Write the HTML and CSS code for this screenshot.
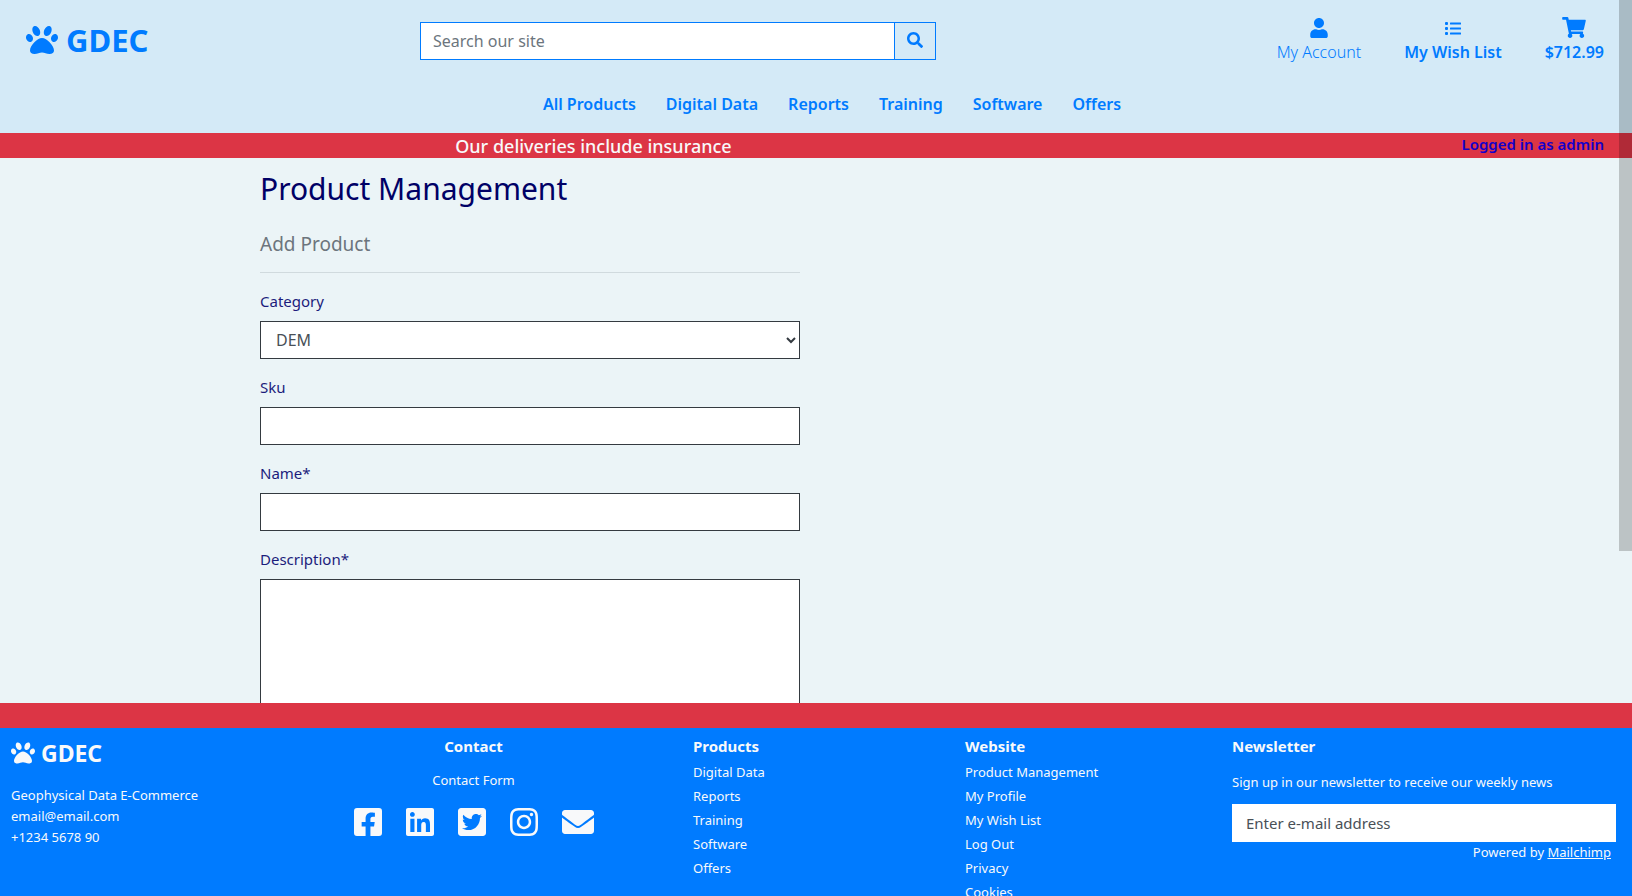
FILE: index.html
```html
<!DOCTYPE html>
<html lang="en">
<head>
<meta charset="utf-8">
<meta name="viewport" content="width=device-width, initial-scale=1">
<title>GDEC - Product Management</title>
<link rel="stylesheet" href="styles.css">
</head>
<body>
<svg class="sprite" aria-hidden="true">
  <symbol id="paw" viewBox="0 0 512 512"><path d="M256 224c-79.41 0-192 122.76-192 200.25 0 34.9 26.81 55.75 71.74 55.75 48.84 0 81.09-25.08 120.26-25.08 39.51 0 71.85 25.08 120.26 25.08 44.93 0 71.74-20.85 71.74-55.75C448 346.76 335.41 224 256 224zm-147.28-12.61c-10.4-34.65-42.44-57.09-71.56-50.13-29.12 6.96-44.29 40.69-33.89 75.34 10.4 34.65 42.44 57.09 71.56 50.13 29.12-6.96 44.29-40.69 33.89-75.34zm84.72-20.78c30.94-8.14 42.93-50.07 26.8-93.68-16.15-43.6-54.3-72.36-85.25-64.21s-42.93 50.08-26.8 93.68c16.15 43.6 54.31 72.36 85.25 64.21zm281.39-29.34c-29.12-6.96-61.15 15.48-71.56 50.13-10.4 34.65 4.77 68.38 33.89 75.34 29.12 6.96 61.15-15.48 71.56-50.13 10.4-34.65-4.77-68.38-33.89-75.34zm-156.27 29.34c30.94 8.14 69.11-20.61 85.25-64.21 16.15-43.6 4.15-85.54-26.79-93.68-30.95-8.14-69.1 20.61-85.25 64.21-16.14 43.6-4.15 85.53 26.79 93.68z"/></symbol>
</svg>

<header class="header">
  <div class="top">
    <a class="brand" href="#"><svg class="brand-paw"><use href="#paw"/></svg>GDEC</a>
    <form class="search">
      <input class="search-input" type="text" placeholder="Search our site" aria-label="Search our site">
      <button class="search-button" type="button" aria-label="Search">
        <svg width="16" height="16" viewBox="0 0 512 512"><path d="M505 442.7L405.3 343c-4.5-4.5-10.6-7-17-7H372c27.6-35.3 44-79.7 44-128C416 93.1 322.9 0 208 0S0 93.1 0 208s93.1 208 208 208c48.3 0 92.7-16.4 128-44v16.3c0 6.400 2.500 12.500 7 17l99.700 99.700c9.400 9.400 24.600 9.400 33.900 0l28.300-28.300c9.400-9.400 9.400-24.600.1-34zM208 336c-70.700 0-128-57.200-128-128 0-70.700 57.200-128 128-128 70.700 0 128 57.200 128 128 0 70.700-57.200 128-128 128z"/></svg>
      </button>
    </form>
    <div class="user-links">
      <a class="user-link light" href="#">
        <svg width="18" height="20" viewBox="0 0 448 512"><path d="M224 256c70.700 0 128-57.300 128-128S294.700 0 224 0 96 57.300 96 128s57.300 128 128 128zm89.600 32h-16.700c-22.200 10.200-46.900 16-72.900 16s-50.600-5.800-72.900-16h-16.700C60.200 288 0 348.200 0 422.400V464c0 26.500 21.500 48 48 48h352c26.500 0 48-21.500 48-48v-41.600c0-74.200-60.200-134.400-134.400-134.400z"/></svg>
        My Account</a>
      <a class="user-link" href="#">
        <svg width="16" height="16" viewBox="0 0 16 16"><rect x="0" y="2" width="3" height="3" rx="1"/><rect x="0" y="7" width="3" height="3" rx="1"/><rect x="0" y="12" width="3" height="3" rx="1"/><rect x="5" y="2.500" width="11" height="2" rx=".5"/><rect x="5" y="7.500" width="11" height="2" rx=".5"/><rect x="5" y="12.500" width="11" height="2" rx=".5"/></svg>
        My Wish List</a>
      <a class="user-link" href="#">
        <svg width="24" height="21" viewBox="0 0 576 512"><path d="M528.120 301.319l47.273-208C578.806 78.301 567.391 64 551.990 64H159.208l-9.166-44.810C147.758 8.021 137.930 0 126.529 0H24C10.745 0 0 10.745 0 24v16c0 13.255 10.745 24 24 24h69.883l70.248 343.435C147.325 417.100 136 435.222 136 456c0 30.928 25.072 56 56 56s56-25.072 56-56c0-15.674-6.447-29.835-16.824-40h209.647C430.447 426.165 424 440.326 424 456c0 30.928 25.072 56 56 56s56-25.072 56-56c0-22.172-12.888-41.332-31.579-50.405l5.517-24.276c3.413-15.018-8.002-29.319-23.403-29.319H218.117l-6.545-32h293.145c11.206 0 20.920-7.754 23.403-18.681z"/></svg>
        $712.99</a>
    </div>
  </div>
  <nav class="nav" aria-label="Products">
    <a href="#">All Products</a><a href="#">Digital Data</a><a href="#">Reports</a><a href="#">Training</a><a href="#">Software</a><a href="#">Offers</a>
  </nav>
</header>

<div class="banner">
  <p class="banner-text">Our deliveries include insurance</p>
  <p class="banner-user">Logged in as admin</p>
</div>

<main class="main">
  <div class="container">
    <form class="product-form">
      <h1 class="title">Product Management</h1>
      <h2 class="subtitle">Add Product</h2>
      <hr class="rule">
      <label class="label" for="category">Category</label>
      <div class="select-wrap">
        <select class="control select" id="category"><option>DEM</option></select>
        <svg class="chevron" width="10" height="7" viewBox="0 0 10 7"><path d="M1 1l4 4 4-4" fill="none" stroke="currentColor" stroke-width="2"/></svg>
      </div>
      <label class="label" for="sku">Sku</label>
      <input class="control" id="sku" type="text">
      <label class="label" for="name">Name*</label>
      <input class="control" id="name" type="text">
      <label class="label" for="description">Description*</label>
      <textarea class="control area" id="description" rows="10"></textarea>
    </form>
  </div>
</main>

<footer class="footer">
  <div class="footer-strip"></div>
  <div class="footer-grid">
    <div class="col">
      <a class="footer-brand" href="#"><svg class="footer-paw"><use href="#paw"/></svg>GDEC</a>
      <address class="address">Geophysical Data E-Commerce<br>email@email.com<br>+1234 5678 90</address>
    </div>
    <div class="col contact">
      <h3 class="heading">Contact</h3>
      <a class="contact-link" href="#">Contact Form</a>
      <div class="social">
        <a href="#" aria-label="Facebook"><svg width="28" height="32" viewBox="0 0 448 512"><path d="M400 32H48A48 48 0 0 0 0 80v352a48 48 0 0 0 48 48h137.250V327.690h-63V256h63v-54.640c0-62.150 37-96.480 93.670-96.480 27.140 0 55.520 4.840 55.520 4.840v61h-31.270c-30.810 0-40.420 19.120-40.420 38.730V256h68.780l-11 71.690h-57.780V480H400a48 48 0 0 0 48-48V80a48 48 0 0 0-48-48z"/></svg></a>
        <a href="#" aria-label="LinkedIn"><svg width="28" height="32" viewBox="0 0 448 512"><path d="M416 32H31.900C14.300 32 0 46.500 0 64.300v383.400C0 465.500 14.300 480 31.900 480H416c17.600 0 32-14.500 32-32.300V64.300c0-17.800-14.400-32.300-32-32.300zM135.400 416H69V202.200h66.500V416zm-33.200-243c-21.300 0-38.500-17.300-38.500-38.500S80.900 96 102.200 96c21.200 0 38.500 17.300 38.500 38.500 0 21.300-17.200 38.500-38.500 38.500zm282.100 243h-66.400V312c0-24.800-.5-56.700-34.500-56.700-34.600 0-39.900 27-39.900 54.900V416h-66.400V202.200h63.700v29.200h.9c8.900-16.800 30.600-34.500 62.900-34.500 67.200 0 79.700 44.300 79.700 101.900V416z"/></svg></a>
        <a href="#" aria-label="Twitter"><svg width="28" height="32" viewBox="0 0 448 512"><path d="M400 32H48C21.500 32 0 53.500 0 80v352c0 26.500 21.500 48 48 48h352c26.500 0 48-21.500 48-48V80c0-26.500-21.500-48-48-48zm-48.900 158.800c.2 2.800.2 5.700.2 8.500 0 86.700-66 186.600-186.600 186.600-37.200 0-71.700-10.800-100.700-29.400 5.300.6 10.400.8 15.800.8 30.700 0 58.900-10.400 81.400-28-28.800-.6-53-19.500-61.300-45.500 10.100 1.500 19.200 1.500 29.600-1.200-30-6.100-52.500-32.500-52.500-64.400v-.8c8.700 4.900 18.900 7.900 29.600 8.300a65.447 65.447 0 0 1-29.200-54.600c0-12.200 3.200-23.400 8.900-33.100 32.300 39.800 80.800 65.800 135.200 68.600-9.300-44.500 24-80.600 64-80.600 18.900 0 35.900 7.900 47.900 20.700 14.800-2.800 29-8.300 41.600-15.800-4.900 15.200-15.200 28-28.800 36.100 13.200-1.400 26-5.100 37.800-10.200-8.900 13.100-20.100 24.700-32.900 34z"/></svg></a>
        <a href="#" aria-label="Instagram"><svg width="28" height="32" viewBox="0 0 448 512"><path d="M224.100 141c-63.600 0-114.900 51.300-114.900 114.900s51.300 114.900 114.900 114.900S339 319.500 339 255.900 287.700 141 224.100 141zm0 189.600c-41.100 0-74.700-33.500-74.700-74.700s33.500-74.700 74.700-74.700 74.700 33.500 74.700 74.700-33.600 74.700-74.700 74.700zm146.400-194.300c0 14.900-12 26.800-26.800 26.800-14.900 0-26.800-12-26.800-26.800s12-26.800 26.800-26.800 26.800 12 26.800 26.800zm76.100 27.200c-1.700-35.900-9.900-67.700-36.200-93.900-26.200-26.200-58-34.400-93.900-36.200-37-2.100-147.900-2.100-184.900 0-35.800 1.700-67.600 9.900-93.900 36.100s-34.400 58-36.200 93.900c-2.100 37-2.100 147.900 0 184.900 1.700 35.900 9.900 67.700 36.200 93.900s58 34.400 93.900 36.200c37 2.100 147.900 2.100 184.900 0 35.900-1.700 67.700-9.900 93.900-36.200 26.200-26.200 34.400-58 36.200-93.900 2.100-37 2.100-147.800 0-184.800zM398.800 388c-7.800 19.600-22.900 34.700-42.600 42.600-29.500 11.700-99.500 9-132.100 9s-102.700 2.600-132.100-9c-19.600-7.800-34.700-22.900-42.600-42.600-11.700-29.500-9-99.500-9-132.100s-2.600-102.700 9-132.100c7.800-19.600 22.900-34.700 42.600-42.600 29.500-11.700 99.500-9 132.100-9s102.700-2.600 132.100 9c19.600 7.800 34.700 22.900 42.600 42.600 11.700 29.500 9 99.500 9 132.100s2.700 102.700-9 132.100z"/></svg></a>
        <a href="#" aria-label="E-mail"><svg width="32" height="32" viewBox="0 0 512 512"><path d="M502.300 190.800c3.900-3.100 9.700-.2 9.700 4.700V400c0 26.500-21.500 48-48 48H48c-26.500 0-48-21.500-48-48V195.600c0-5 5.700-7.800 9.700-4.700 22.400 17.400 52.100 39.500 154.100 113.600 21.100 15.400 56.700 47.800 92.200 47.600 35.700.3 72-32.800 92.300-47.600 102-74.100 131.600-96.300 154-113.700zM256 320c23.200.4 56.600-29.200 73.400-41.400 132.700-96.300 142.800-104.700 173.400-128.700 5.800-4.500 9.200-11.500 9.200-18.900v-19c0-26.500-21.500-48-48-48H48c-26.500 0-48 21.500-48 48v19c0 7.400 3.400 14.300 9.200 18.900 30.600 23.900 40.700 32.400 173.400 128.700 16.800 12.200 50.200 41.800 73.400 41.400z"/></svg></a>
      </div>
    </div>
    <div class="col links">
      <h3 class="heading">Products</h3>
      <a href="#">Digital Data</a><a href="#">Reports</a><a href="#">Training</a><a href="#">Software</a><a href="#">Offers</a>
    </div>
    <div class="col links">
      <h3 class="heading">Website</h3>
      <a href="#">Product Management</a><a href="#">My Profile</a><a href="#">My Wish List</a><a href="#">Log Out</a><a href="#">Privacy</a><a href="#">Cookies</a>
    </div>
    <form class="col newsletter">
      <h3 class="heading">Newsletter</h3>
      <label class="newsletter-label" for="email">Sign up in our newsletter to receive our weekly news</label>
      <input class="newsletter-input" id="email" type="email" placeholder="Enter e-mail address">
      <p class="powered">Powered by <a href="#">Mailchimp</a></p>
    </form>
  </div>
</footer>
<div class="scroll-thumb" aria-hidden="true"></div>
</body>
</html>
```
FILE: styles.css
```css
* { box-sizing: border-box; }

body {
  margin: 0;
  height: 100vh;
  display: flex;
  flex-direction: column;
  overflow: hidden;
  background: #ebf4f7;
  font-family: "Noto Sans", "Open Sans", sans-serif;
  font-size: 16px;
  line-height: 24px;
}

h1, h2, h3, p { margin: 0; }
a { color: inherit; text-decoration: none; }
svg { fill: currentColor; display: block; }
input, select, textarea, button { font: inherit; border-radius: 0; }
.sprite { position: absolute; width: 0; height: 0; }

.header { flex: none; background: #d4eaf7; color: #007bff; }
.top {
  display: grid;
  grid-template-columns: 394px minmax(200px, 516px) 1fr;
  align-items: start;
  padding: 15px 28px 0 26px;
}
.brand {
  display: flex;
  align-items: center;
  gap: 8px;
  height: 50px;
  font-size: 31px;
  font-weight: 700;
}
.brand-paw { width: 32px; height: 32px; }
.search { display: flex; height: 38px; margin-top: 7px; }
.search-input {
  flex: 1;
  min-width: 0;
  border: 1px solid #007bff;
  padding: 0 12px;
  background: #fff;
}
.search-input::placeholder { color: #6c757d; opacity: 1; }
.search-button {
  width: 42px;
  margin-left: -1px;
  padding: 0 0 3px;
  display: grid;
  place-items: center;
  border: 1px solid #007bff;
  background: transparent;
  color: #007bff;
}
.user-links { display: flex; justify-content: flex-end; gap: 43px; }
.user-link {
  display: grid;
  grid-template-rows: 25px 24px;
  justify-items: center;
  align-items: center;
  font-size: 16px;
  font-weight: 600;
}
.user-link.light { font-weight: 300; }

.nav {
  display: flex;
  justify-content: center;
  gap: 30px;
  padding: 27px 0 17px 32px;
  font-size: 16px;
  font-weight: 600;
}

.banner {
  flex: none;
  display: grid;
  grid-template-columns: 8fr 3fr;
  align-items: center;
  height: 25px;
  background: #dc3545;
}
.banner-text { text-align: center; color: #f8f9fa; font-size: 18px; font-weight: 500; }
.banner-user {
  padding-right: 28px;
  text-align: right;
  color: #1400c8;
  font-size: 15px;
  font-weight: 600;
  line-height: 22px;
  align-self: start;
}

.main { flex: 1; min-height: 0; overflow: hidden; }
.container {
  max-width: 1112px;
  margin: 0 auto;
  display: grid;
  grid-template-columns: 1fr 1fr;
  gap: 32px;
  padding-top: 12px;
}
.title { color: #000066; font-size: 30px; font-weight: 400; line-height: 38px; }
.subtitle { margin-top: 24px; color: #6c757d; font-size: 19px; font-weight: 400; line-height: 24px; }
.rule { margin: 16px 0; border: 0; border-top: 1px solid #d0dade; }
.label { display: block; margin-bottom: 8px; color: #1c1c7c; font-size: 15px; }
.control {
  display: block;
  width: 100%;
  height: 38px;
  margin-bottom: 16px;
  padding: 0 15px;
  border: 1px solid #343a40;
  background: #fff;
  color: #495057;
}
.select { appearance: none; }
.select-wrap { position: relative; }
.chevron { position: absolute; right: 4px; top: 16px; color: #343a40; }
.area { height: 240px; resize: none; }

.footer { flex: none; height: 193px; overflow: hidden; background: #007bff; color: #f8f9fa; }
.footer-strip { height: 25px; background: #dc3545; }
.footer-grid {
  display: grid;
  grid-template-columns: 2fr 3fr 2fr 2fr 3fr;
  padding-top: 6px;
  font-size: 13px;
}
.col { min-width: 0; padding: 0 16px 0 11px; }
.footer-brand {
  display: flex;
  align-items: center;
  gap: 6px;
  height: 38px;
  font-size: 23px;
  font-weight: 700;
}
.footer-paw { width: 24px; height: 24px; }
.address { margin-top: 13px; font-style: normal; line-height: 21px; white-space: nowrap; }
.heading { font-size: 15px; font-weight: 700; line-height: 24px; }
.contact { display: flex; flex-direction: column; align-items: center; }
.contact-link { margin-top: 10px; }
.social { display: flex; gap: 24px; margin-top: 14px; }
.links { display: flex; flex-direction: column; align-items: flex-start; padding-left: 13px; }
.links .heading { margin-bottom: 2px; }
.newsletter { padding-left: 8px; }
.newsletter-label { display: block; margin: 12px 0 10px; white-space: nowrap; }
.newsletter-input {
  display: block;
  width: 100%;
  height: 38px;
  padding: 0 14px;
  border: 0;
  background: #fff;
  font-size: 15px;
}
.newsletter-input::placeholder { color: #495057; opacity: 1; }
.powered { padding-right: 5px; text-align: right; line-height: 21px; }
.powered a { text-decoration: underline; }

/* Overlay scroll bar: sits above the header and the content */
.scroll-thumb {
  position: fixed;
  top: 0;
  right: 0;
  width: 13px;
  height: 551px;
  background: rgba(0, 0, 0, .2);
}
```
